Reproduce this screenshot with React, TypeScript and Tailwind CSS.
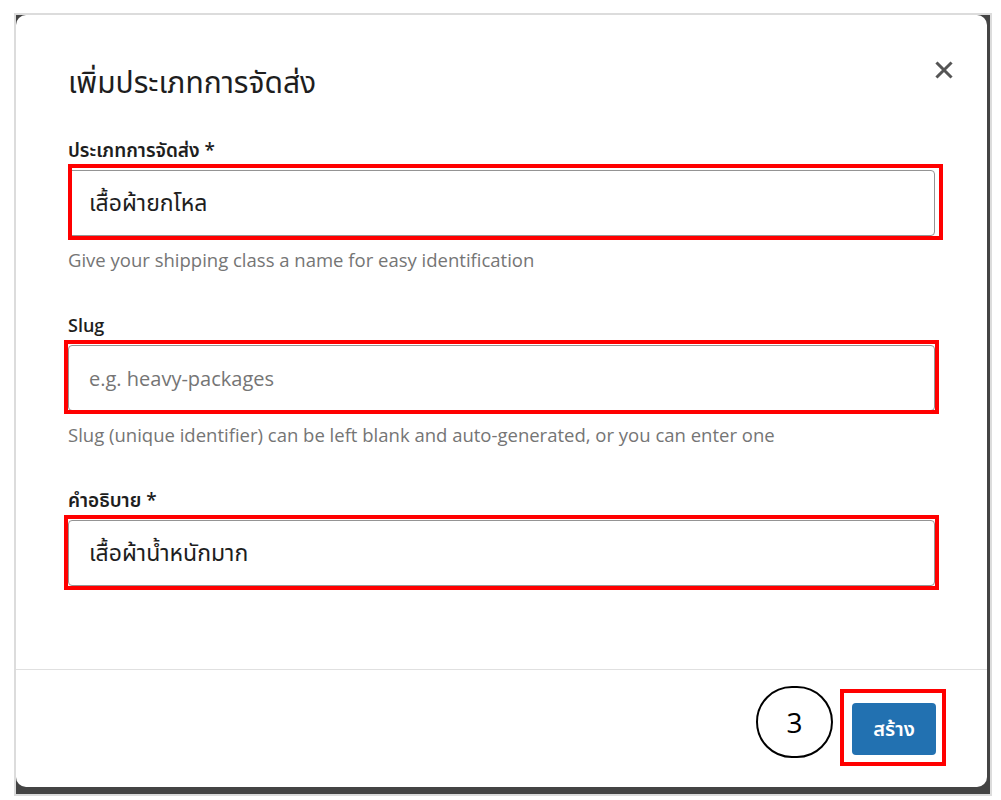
import React from "react";

const font = { fontFamily: '"Open Sans", "Noto Sans Thai", "Noto Sans", "DejaVu Sans", sans-serif' };

function Field({
  label,
  labelSize,
  value,
  placeholder,
  help,
  redClass,
}: {
  label: string;
  labelSize: string;
  value?: string;
  placeholder?: string;
  help?: string;
  redClass: string;
}) {
  return (
    <div className="flex flex-col">
      <label className={"leading-[24px] font-semibold text-[#1e1e1e] mb-[8px] " + labelSize}>{label}</label>
      <div className="relative">
        <input
          readOnly
          value={value ?? ""}
          placeholder={placeholder}
          className={
            "w-full h-[66px] rounded-[4px] border border-[#949494] bg-white pl-[20px] text-[#1e1e1e] placeholder:text-[#757575] outline-none " +
            (value ? "text-[23px]" : "text-[20px]")
          }
          style={font}
        />
        <div className={"absolute border-[4px] border-[#ff0000] pointer-events-none " + redClass} />
      </div>
      {help && <p className="mt-[12px] text-[18.5px] leading-[24px] text-[#757575]">{help}</p>}
    </div>
  );
}

export default function App() {
  return (
    <div className="min-h-screen bg-white pt-[13px] pl-[14px]" style={font}>
      <div className="w-[978px] h-[783px] border-2 border-[#dcdcdc] bg-[#444444] pr-[3px] pb-[7px]">
        <div className="w-[971px] h-[772px] bg-white rounded-[10px] flex flex-col">
          {/* Header */}
          <div className="flex items-start justify-between pl-[52px] pr-[31px] pt-[49px]">
            <h1 className="text-[30px] leading-[36px] font-normal text-[#1e1e1e]">เพิ่มประเภทการจัดส่ง</h1>
            <button className="mt-[-6px] w-[24px] h-[24px] flex items-center justify-center text-[#555555]">
              <svg width="18" height="18" viewBox="0 0 18 18" fill="none">
                <path d="M2.5 2.5 L15.5 15.5 M15.5 2.5 L2.5 15.5" stroke="currentColor" strokeWidth="3" strokeLinecap="square" />
              </svg>
            </button>
          </div>

          {/* Body */}
          <div className="flex flex-col gap-[41px] px-[52px] pt-[38px] pb-[83px]">
            <Field
              label="ประเภทการจัดส่ง *"
              labelSize="text-[19px]"
              value="เสื้อผ้ายกโหล"
              help="Give your shipping class a name for easy identification"
              redClass="left-[0px] right-[-8px] top-[-6px] bottom-[-4px]"
            />
            <Field
              label="Slug"
              labelSize="text-[18px]"
              placeholder="e.g. heavy-packages"
              help="Slug (unique identifier) can be left blank and auto-generated, or you can enter one"
              redClass="left-[-4px] right-[-4px] top-[-5px] bottom-[-3px]"
            />
            <Field
              label="คำอธิบาย *"
              labelSize="text-[19px]"
              value="เสื้อผ้าน้ำหนักมาก"
              redClass="left-[-4px] right-[-4px] top-[-5px] bottom-[-4px]"
            />
          </div>

          {/* Footer */}
          <div className="flex-1 border-t border-[#e0e0e0] flex items-center justify-end pr-[51px]">
            <div className="mr-[19px] mt-[-14px] w-[77px] h-[72px] rounded-full border-2 border-black flex items-center justify-center text-[28px] text-black">
              3
            </div>
            <div className="relative">
              <button className="w-[84px] h-[52px] rounded-[4px] bg-[#2271b1] text-white text-[20px] font-semibold">
                สร้าง
              </button>
              <div className="absolute left-[-12px] right-[-10px] top-[-14px] bottom-[-11px] border-[4px] border-[#ff0000] pointer-events-none" />
            </div>
          </div>
        </div>
      </div>
    </div>
  );
}
